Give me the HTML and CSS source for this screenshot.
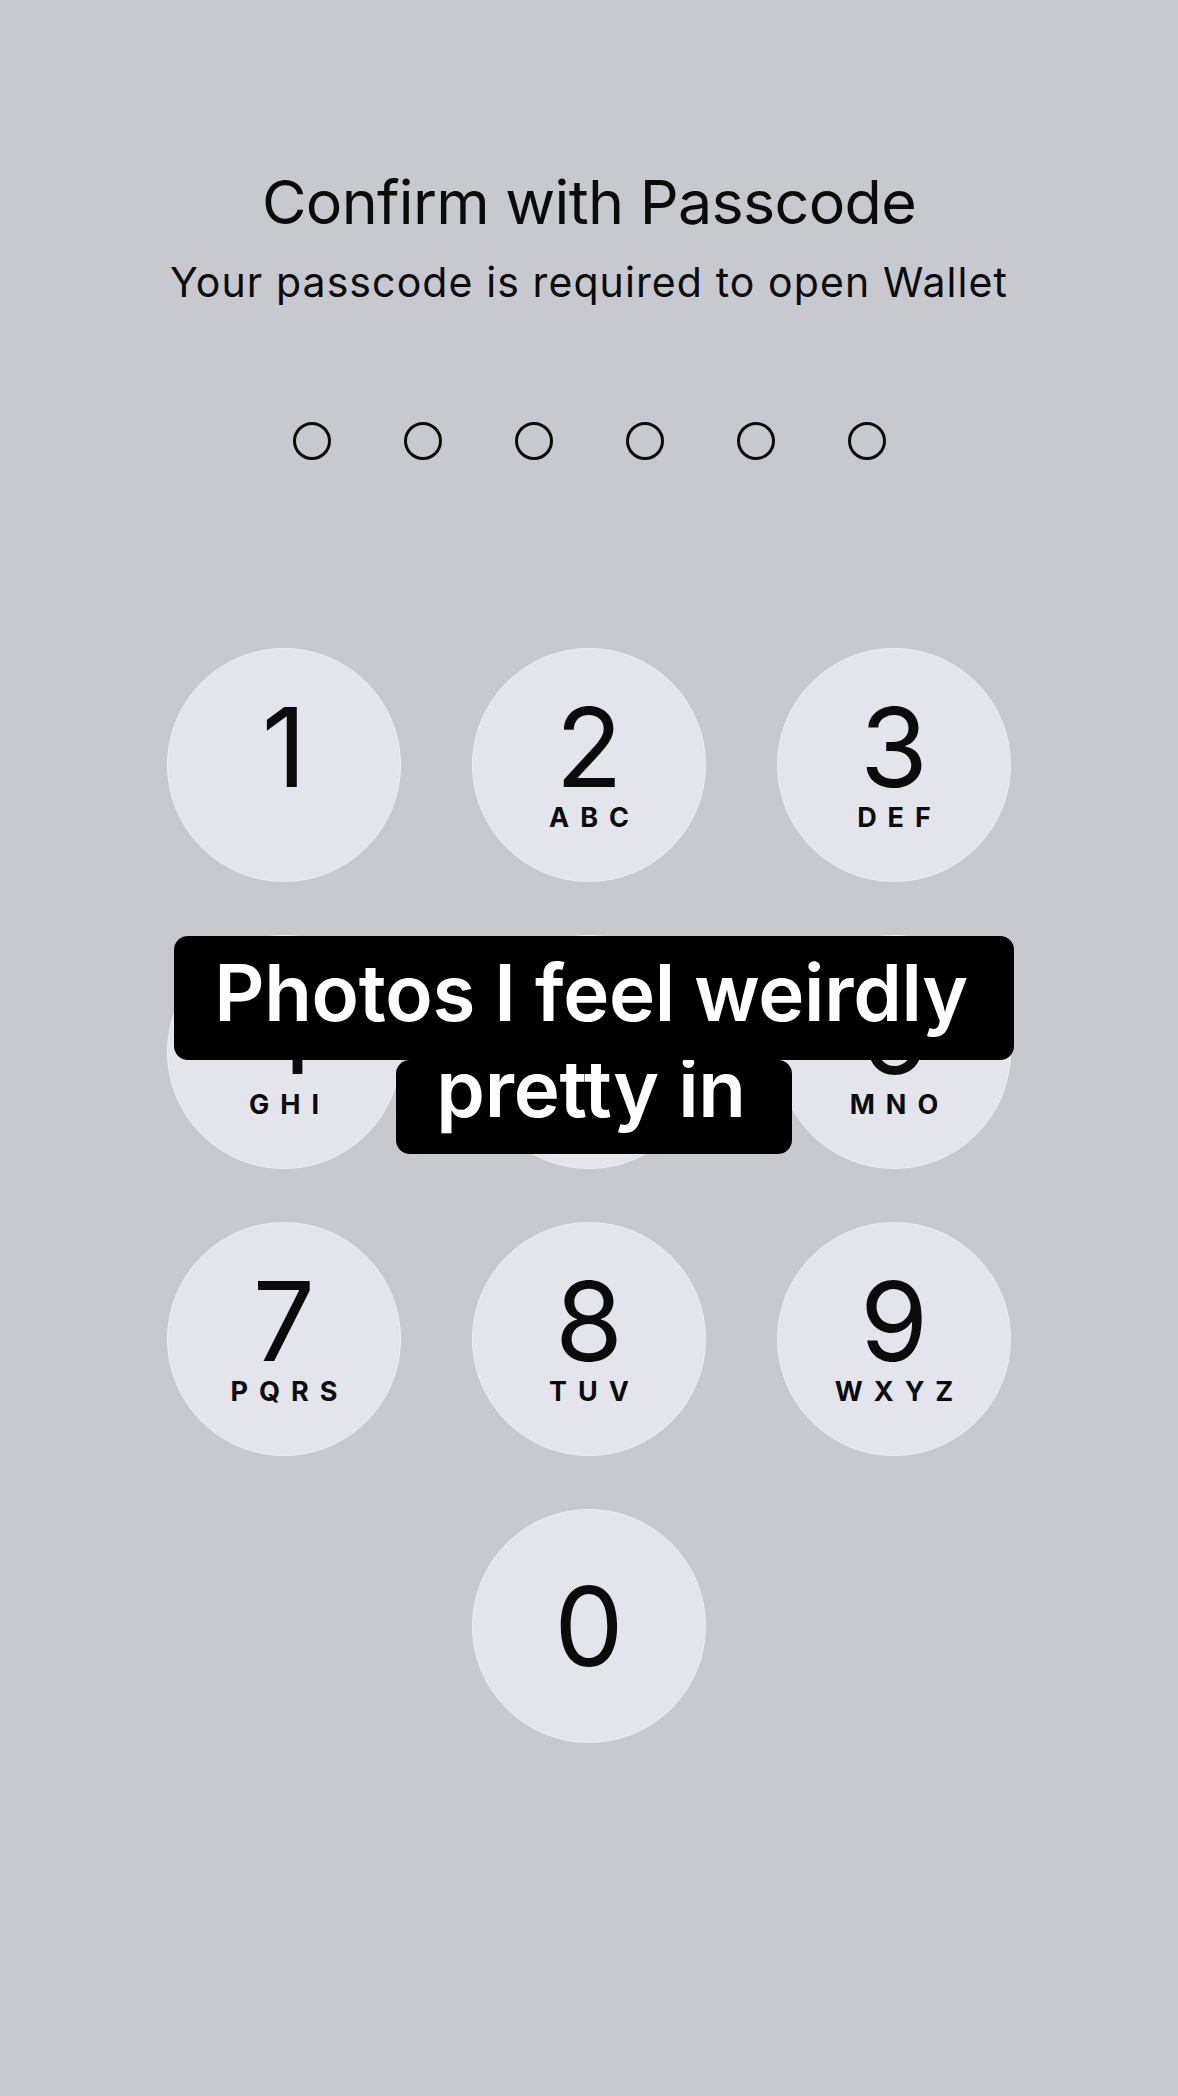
FILE: index.html
```html
<!DOCTYPE html>
<html lang="en">
<head>
  <meta charset="UTF-8">
  <meta name="viewport" content="width=device-width, initial-scale=1.0">
  <title>Confirm with Passcode</title>
  <link rel="stylesheet" href="styles.css">
</head>
<body>
  <div class="screen">
    <div class="header">
      <h1 class="title">Confirm with Passcode</h1>
      <p class="subtitle">Your passcode is required to open Wallet</p>
    </div>

    <div class="dots">
      <span class="dot"></span>
      <span class="dot"></span>
      <span class="dot"></span>
      <span class="dot"></span>
      <span class="dot"></span>
      <span class="dot"></span>
    </div>

    <div class="keypad">
      <div class="key"><span class="digit">1</span><span class="letters">&nbsp;</span></div>
      <div class="key"><span class="digit">2</span><span class="letters">ABC</span></div>
      <div class="key"><span class="digit">3</span><span class="letters">DEF</span></div>
      <div class="key"><span class="digit">4</span><span class="letters">GHI</span></div>
      <div class="key"><span class="digit">5</span><span class="letters">JKL</span></div>
      <div class="key"><span class="digit">6</span><span class="letters">MNO</span></div>
      <div class="key"><span class="digit">7</span><span class="letters">PQRS</span></div>
      <div class="key"><span class="digit">8</span><span class="letters">TUV</span></div>
      <div class="key"><span class="digit">9</span><span class="letters">WXYZ</span></div>
      <div class="key key-zero"><span class="digit">0</span></div>
    </div>

    <!-- caption sticker laid over the keypad -->
    <div class="caption">
      <span class="caption-line first">Photos I feel weirdly</span>
      <span class="caption-line last">pretty in</span>
    </div>
  </div>
</body>
</html>
```

FILE: styles.css
```css
html {
  background-color: #c8c9ce;
}
body {
  margin: 0;
  font-family: 'Inter', 'Noto Sans', sans-serif;
  color: #0b0b0c;
}
.screen {
  position: relative;
  min-height: 2096px;
}
.header {
  padding-top: 166px;
  text-align: center;
}
.title {
  margin: 0;
  font-size: 61px;
  line-height: 72px;
  font-weight: 400;
  letter-spacing: -0.7px;
}
.subtitle {
  margin: 20px 0 0;
  font-size: 41px;
  line-height: 48px;
  font-weight: 400;
  letter-spacing: 1.1px;
}
.dots {
  display: flex;
  justify-content: center;
  gap: 73px;
  margin-top: 116px;
}
.dot {
  width: 38px;
  height: 38px;
  box-sizing: border-box;
  border: 3.5px solid #0b0b0c;
  border-radius: 50%;
}
.keypad {
  display: grid;
  grid-template-columns: repeat(3, 234px);
  column-gap: 71px;
  row-gap: 53px;
  justify-content: center;
  margin-top: 188px;
}
.key {
  width: 234px;
  height: 234px;
  box-sizing: border-box;
  border-radius: 50%;
  background-color: #e4e5ec;
  border: 1.5px solid #eeeff4;
  display: flex;
  flex-direction: column;
  align-items: center;
  padding-top: 43px;
}
.key-zero {
  grid-column: 2;
  justify-content: center;
  padding-top: 0;
}
.digit {
  font-size: 110px;
  line-height: 110px;
  font-weight: 400;
}
.letters {
  margin-top: 1px;
  font-size: 27px;
  line-height: 30px;
  font-weight: 700;
  letter-spacing: 11px;
  margin-right: -11px;
}
.caption {
  position: absolute;
  top: 936px;
  left: 0;
  right: 0;
  display: flex;
  flex-direction: column;
  align-items: center;
  margin-left: 10px;
}
.caption-line {
  background-color: #000;
  color: #fff;
  font-size: 78px;
  line-height: 58px;
  font-weight: 600;
  letter-spacing: -0.3px;
  padding: 0 46px 0 40px;
  border-radius: 14px;
}
.caption-line.first {
  padding-top: 28px;
  padding-bottom: 38px;
  position: relative;
  z-index: 1;
}
.caption-line.last {
  padding-bottom: 36px;
}
```
